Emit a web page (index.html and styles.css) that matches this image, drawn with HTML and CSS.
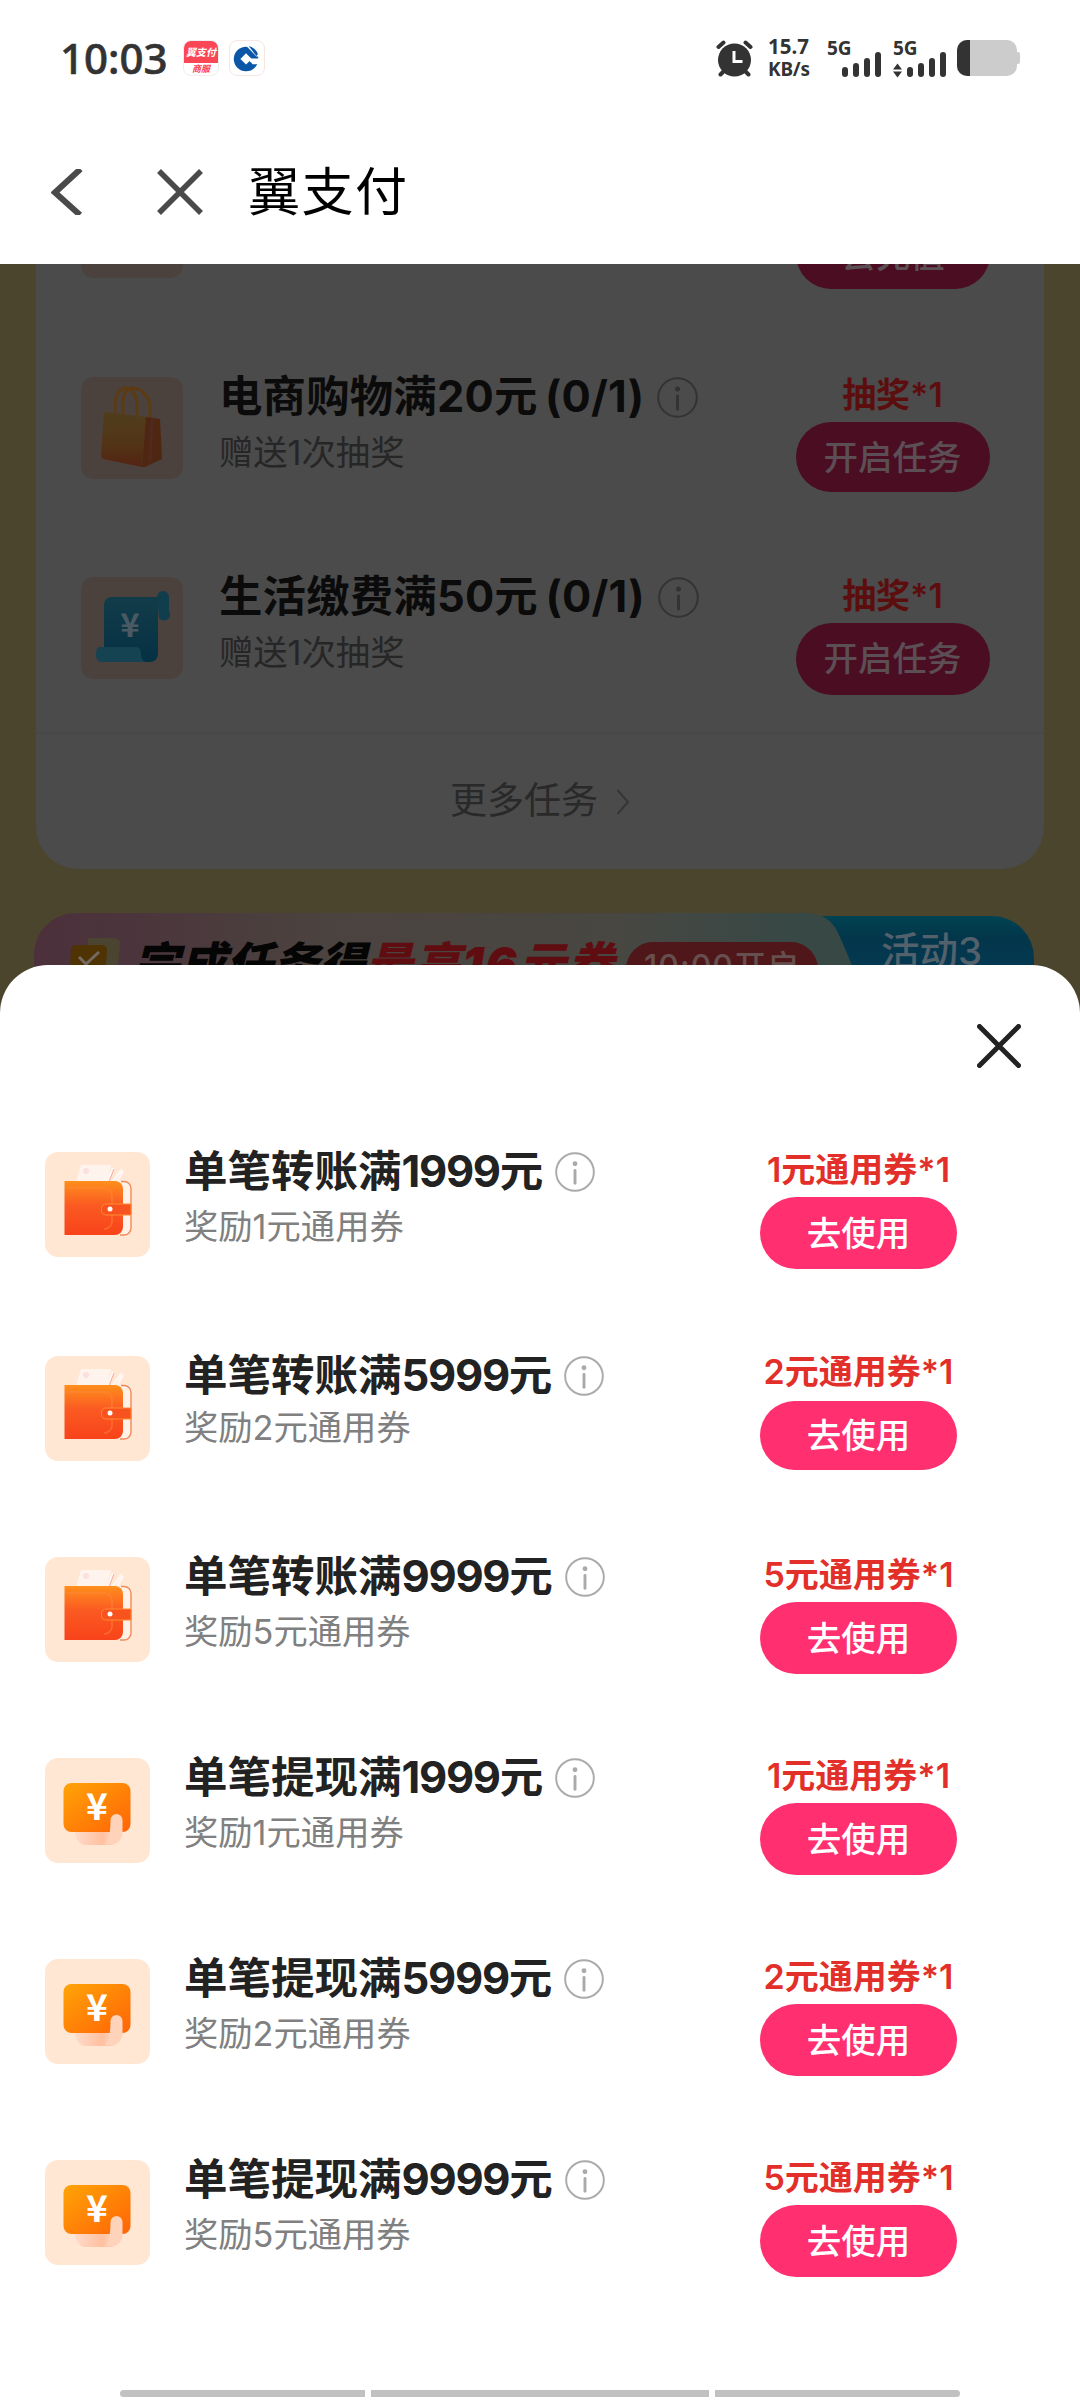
FILE: index.html
```html
<!DOCTYPE html>
<html lang="zh-CN">
<head>
<meta charset="utf-8">
<title>翼支付</title>
<link rel="stylesheet" href="styles.css">
</head>
<body>
<svg class="defs" width="0" height="0" aria-hidden="true">
  <defs>
    <linearGradient id="g-wallet" x1="0" y1="0" x2="0" y2="1"><stop offset="0" stop-color="#ff8f1c"/><stop offset=".45" stop-color="#fb5a22"/><stop offset="1" stop-color="#f8431a"/></linearGradient>
    <linearGradient id="g-cash" x1="0" y1="0" x2="1" y2="1"><stop offset="0" stop-color="#ffa406"/><stop offset="1" stop-color="#ff6407"/></linearGradient>
    <linearGradient id="g-hand" x1="0" y1="0" x2="1" y2="0"><stop offset="0" stop-color="#ffdccb"/><stop offset=".6" stop-color="#ffc0a0"/><stop offset="1" stop-color="#ffdcc6"/></linearGradient>
    <linearGradient id="g-bag" x1="0" y1="0" x2="0" y2="1"><stop offset="0" stop-color="#4f3d1c"/><stop offset=".6" stop-color="#523415"/><stop offset="1" stop-color="#552314"/></linearGradient>
    <linearGradient id="g-bill" x1="0" y1="0" x2="0" y2="1"><stop offset="0" stop-color="#123c49"/><stop offset="1" stop-color="#063144"/></linearGradient>
  </defs>
  <symbol id="info" viewBox="0 0 41 41"><circle cx="20.500" cy="20.500" r="19.300" fill="none" stroke="currentColor" stroke-width="2"/><circle cx="20.500" cy="12" r="2.500" fill="currentColor"/><path d="M20.500 19v13" stroke="currentColor" stroke-width="3" stroke-linecap="round"/></symbol>
  <symbol id="wallet" viewBox="0 0 105 105">
    <rect width="105" height="105" rx="13" fill="#ffe7d3"/>
    <path d="M36 13h30l-5 20H30z" fill="#fff3ee"/><circle cx="41" cy="19" r="3" fill="#fbe0dc"/>
    <path d="M62 30l6-14M68 29l9-12M72 30l6-11" stroke="#fff5f2" stroke-width="2.500"/><path d="M64 30l5-13" stroke="#f4aca0" stroke-width="1"/>
    <path d="M70 29h9a7 7 0 0 1 7 7v40a7 7 0 0 1-7 7h-9z" fill="#fff1e6"/>
    <path d="M76 29.500h3a7 7 0 0 1 7 7V76a7 7 0 0 1-7 7h-4" fill="none" stroke="#ee8a5c" stroke-width="1.400"/>
    <path d="M19.500 29H70a8 8 0 0 1 8 8v38a8 8 0 0 1-8 8H19.500z" fill="url(#g-wallet)"/>
    <path d="M21 36h38a8 8 0 0 1 8 8v26a8 8 0 0 1-8 7" fill="none" stroke="#ff8a3a" stroke-opacity=".55" stroke-width="1.500"/>
    <path d="M86 52H61a4.500 4.500 0 0 0-4.500 4.500v2A4.500 4.500 0 0 0 61 63h25z" fill="#f8521e" stroke="#ff8a30" stroke-width="1"/>
    <circle cx="65" cy="57" r="2.500" fill="#fff"/>
  </symbol>
  <symbol id="cash" viewBox="0 0 105 105">
    <rect width="105" height="105" rx="13" fill="#ffe7d3"/>
    <path d="M29 70h46v8a9 9 0 0 1-9 9H40c-6 0-10-7-11-17z" fill="url(#g-hand)"/>
    <rect x="18.500" y="25" width="67" height="49" rx="8" fill="url(#g-cash)"/>
    <text x="52" y="62" class="yen" fill="#fff">¥</text>
    <path d="M60 86c4-6 5.500-12 5.500-24a6 6 0 0 1 12 0v13a11 11 0 0 1-11 11z" fill="#ffd2ba"/>
  </symbol>
</svg>

<header class="statusbar">
  <div class="statusbar__left">
    <span class="clock">10:03</span>
    <span class="app app--bestpay"><b>翼支付</b><i>商服</i></span>
    <svg class="app app--bank" viewBox="0 0 36 36"><circle cx="17" cy="19" r="13" fill="#0a57a8"/><path d="M17 13l6 6-6 6-6-6z" fill="#fff"/><path d="M21 18.500h12v6H24l-3-3z" fill="#fff"/><path d="M17.500 5.500L28 16.500h3V4z" fill="#fff"/><path d="M20 5.500c4 .5 8 4 9.500 8.500l-1.500 2z" fill="#0a57a8"/></svg>
  </div>
  <div class="statusbar__right">
    <svg class="alarm" viewBox="0 0 37 37"><g fill="none" stroke="#333" stroke-linecap="round" stroke-width="4"><path d="M2.500 7l5-4.500M34.500 7l-5-4.500M4.500 34.500l4-4M32.500 34.500l-4-4"/></g><circle cx="18.500" cy="20" r="16.500" fill="#333"/><path d="M18 11v10.500h8.500" fill="none" stroke="#fff" stroke-width="3"/></svg>
    <div class="rate"><span>15.7</span><span class="rate__unit">KB/s</span></div>
    <div class="signal"><span>5G</span><svg viewBox="0 0 56 27"><g fill="#333"><rect x="15" y="16" width="6" height="10" rx="3"/><rect x="26" y="12" width="6" height="14" rx="3"/><rect x="37" y="7" width="6" height="19" rx="3"/><rect x="48" y="1" width="6" height="25" rx="3"/></g></svg></div>
    <div class="signal signal--data"><span>5G</span><svg viewBox="0 0 56 27"><g fill="#333"><path d="M0 18.500 4.500 12.500 9 18.500zM0 20.500 4.500 26.500 9 20.500z"/><rect x="14" y="16" width="6" height="10" rx="3"/><rect x="25" y="12" width="6" height="14" rx="3"/><rect x="36" y="7" width="6" height="19" rx="3"/><rect x="47" y="1" width="6" height="25" rx="3"/></g></svg></div>
    <svg class="battery" viewBox="0 0 63 36"><rect x="56" y="12" width="7" height="12" rx="2" fill="#ccc"/><rect width="60" height="36" rx="10" fill="#ccc"/><path d="M13 0H10A10 10 0 0 0 0 10v16a10 10 0 0 0 10 10h3z" fill="#333"/></svg>
  </div>
</header>

<nav class="titlebar">
  <svg class="titlebar__back" viewBox="0 0 32 46"><path d="M29.500 0 4 23.500 29 46" fill="none" stroke="#4a4a4a" stroke-width="6"/></svg>
  <svg class="titlebar__close" viewBox="0 0 46 46"><path d="M2 2 44 44M44 2 2 44" stroke="#4a4a4a" stroke-width="5.500"/></svg>
  <h1>翼支付</h1>
</nav>

<main class="backdrop">
  <section class="card">
    <div class="task task--cut">
      <span class="task__blank"></span>
      <span class="task__button">去充值</span>
    </div>
    <div class="task">
      <svg class="task__icon" viewBox="0 0 102 102"><rect width="102" height="102" rx="13" fill="#4b423d"/><g fill="none" stroke="#5c3a12" stroke-width="3"><path d="M34 40V28c0-10 5-17 11-17s11 8 11 17v11"/><path d="M42 38V26c0-9 4-15 10-15 8 0 17 9 17 19v12"/></g><path d="M23 35l42 5-4 50-39-8a3 3 0 0 1-2-3z" fill="url(#g-bag)"/><path d="M65 40l14 2 2 40-17 8h-3z" fill="#4f2711"/><path d="M71 42l-2 43" stroke="#502a22" stroke-width="3"/></svg>
      <div class="task__main"><h2>电商购物满20元 (0/1)<svg class="info"><use href="#info"/></svg></h2><p>赠送1次抽奖</p></div>
      <div class="task__side"><strong>抽奖*1</strong><span class="task__button">开启任务</span></div>
    </div>
    <div class="task task--last">
      <svg class="task__icon" viewBox="0 0 102 102"><rect width="102" height="102" rx="13" fill="#4b423d"/><path d="M76 20a6 6 0 0 1 12 0v14a6 6 0 0 1-10 7z" fill="#113e4d"/><path d="M31 20h52c-4 1-6 4-6 9v48a8 8 0 0 1-8 8H48L23 70V28c0-5 3-8 8-8z" fill="url(#g-bill)"/><path d="M19 70h36c4 0 5 3 5 7s2 8 6 8H21c-4 0-6-3-6-7s1-8 4-8z" fill="#154351"/><text x="49" y="60" class="yen yen--small" fill="#4a5a64">¥</text></svg>
      <div class="task__main"><h2>生活缴费满50元 (0/1)<svg class="info"><use href="#info"/></svg></h2><p>赠送1次抽奖</p></div>
      <div class="task__side"><strong>抽奖*1</strong><span class="task__button">开启任务</span></div>
    </div>
    <div class="more"><span>更多任务</span><svg viewBox="0 0 14 28"><path d="M1.500 2l10.500 12L1.500 26" fill="none" stroke="#363636" stroke-width="2"/></svg></div>
  </section>
  <section class="banner">
    <svg class="banner__shape" viewBox="0 0 1000 90" preserveAspectRatio="none">
      <defs>
        <linearGradient id="g-ban" x1="0" x2="1"><stop offset="0" stop-color="#4c303b"/><stop offset=".12" stop-color="#4b353c"/><stop offset=".35" stop-color="#4b433f"/><stop offset=".7" stop-color="#484742"/><stop offset=".9" stop-color="#384845"/></linearGradient>
        <linearGradient id="g-tab" x1="0" y1="0" x2="0" y2="1"><stop offset="0" stop-color="#004352"/><stop offset=".25" stop-color="#03364a"/><stop offset="1" stop-color="#063d5c"/></linearGradient>
      </defs>
      <path d="M780 3h178a42 42 0 0 1 42 42v45H780z" fill="url(#g-tab)"/>
      <path d="M0 90V45A42 42 0 0 1 42 0H770c22 0 30 10 36 24l28 66z" fill="url(#g-ban)"/>
    </svg>
    <svg class="banner__icon" viewBox="0 0 52 60"><path d="M20 1h26a6 6 0 0 1 6 6l-5 50H16z" fill="#4b4430"/><path d="M8 8h26a5 5 0 0 1 5 5l-4 47H0L3 13a5 5 0 0 1 5-5z" fill="#4f3303"/><path d="M11 20l7 7 13-12" fill="none" stroke="#756a60" stroke-width="3"/></svg>
    <p class="banner__title">完成任务得<em>最高16元券</em></p>
    <span class="banner__time">10:00开启</span>
    <span class="banner__tab">活动3</span>
  </section>
</main>

<section class="sheet">
  <div class="sheet__head"><svg viewBox="0 0 44 44"><path d="M2.500 2.500l39 39M41.500 2.500l-39 39" stroke="#222" stroke-width="5" stroke-linecap="round"/></svg></div>
  <ul class="coupons">
    <li class="coupon"><svg class="coupon__icon"><use href="#wallet"/></svg><div class="coupon__main"><h2>单笔转账满<b>1999</b>元<svg class="info"><use href="#info"/></svg></h2><p>奖励1元通用券</p></div><div class="coupon__side"><strong>1元通用券*1</strong><span class="coupon__button">去使用</span></div></li>
    <li class="coupon coupon--tight"><svg class="coupon__icon"><use href="#wallet"/></svg><div class="coupon__main"><h2>单笔转账满<b>5999</b>元<svg class="info"><use href="#info"/></svg></h2><p>奖励2元通用券</p></div><div class="coupon__side"><strong>2元通用券*1</strong><span class="coupon__button">去使用</span></div></li>
    <li class="coupon"><svg class="coupon__icon"><use href="#wallet"/></svg><div class="coupon__main"><h2>单笔转账满<b>9999</b>元<svg class="info"><use href="#info"/></svg></h2><p>奖励5元通用券</p></div><div class="coupon__side"><strong>5元通用券*1</strong><span class="coupon__button">去使用</span></div></li>
    <li class="coupon"><svg class="coupon__icon"><use href="#cash"/></svg><div class="coupon__main"><h2>单笔提现满<b>1999</b>元<svg class="info"><use href="#info"/></svg></h2><p>奖励1元通用券</p></div><div class="coupon__side"><strong>1元通用券*1</strong><span class="coupon__button">去使用</span></div></li>
    <li class="coupon"><svg class="coupon__icon"><use href="#cash"/></svg><div class="coupon__main"><h2>单笔提现满<b>5999</b>元<svg class="info"><use href="#info"/></svg></h2><p>奖励2元通用券</p></div><div class="coupon__side"><strong>2元通用券*1</strong><span class="coupon__button">去使用</span></div></li>
    <li class="coupon"><svg class="coupon__icon"><use href="#cash"/></svg><div class="coupon__main"><h2>单笔提现满<b>9999</b>元<svg class="info"><use href="#info"/></svg></h2><p>奖励5元通用券</p></div><div class="coupon__side"><strong>5元通用券*1</strong><span class="coupon__button">去使用</span></div></li>
  </ul>
  <div class="gesture"><i></i><i></i><i></i></div>
</section>
</body>
</html>
```
FILE: styles.css
```css
* { box-sizing: border-box; margin: 0; padding: 0; }
body {
  position: relative;
  width: 1080px;
  height: 2400px;
  overflow: hidden;
  background: #fff;
  color: #222;
  font-family: Inter, "Noto Sans CJK SC", sans-serif;
}
h1, h2, p, span, strong { white-space: nowrap; }
svg { display: block; flex: none; }
.defs { position: absolute; }
.yen { font: 700 37px "Noto Sans CJK SC", sans-serif; text-anchor: middle; }
.yen--small { font-size: 33px; }

/* status bar */
.statusbar { display: flex; justify-content: space-between; height: 116px; padding: 40px 60px; color: #333; }
.statusbar__left, .statusbar__right { display: flex; }
.clock { width: 123px; font: 500 42px/36px "Noto Sans", sans-serif; -webkit-text-stroke: 0.6px #333; }
.app { width: 36px; height: 36px; border-radius: 8px; overflow: hidden; margin-right: 10px; }
.app--bestpay { display: flex; flex-direction: column; border: 1px solid #eee; background: #fff; color: #ff4055; text-align: center; }
.app--bestpay b { height: 22px; background: #fb4656; color: #fff; font: italic 700 10px/22px "Noto Sans CJK SC", sans-serif; }
.app--bestpay i { font: italic 700 9px/12px "Noto Sans CJK SC", sans-serif; }
.app--bank { border: 1px solid #f5e6e0; }
.alarm { width: 37px; height: 37px; margin-right: 15px; }
.rate { display: flex; flex-direction: column; width: 59px; font: 700 20.500px/23px "Noto Sans", sans-serif; margin-top: -5px; }
.rate__unit { font-size: 19px; letter-spacing: -0.2px; }
.signal { width: 66px; font: 700 19px/14px "Noto Sans", sans-serif; padding-top: 1px; }
.signal span { display: block; height: 10px; }
.signal svg { width: 56px; height: 27px; }
.signal--data { width: 64px; }
.battery { width: 63px; height: 36px; }

/* title bar */
.titlebar { display: flex; align-items: flex-start; height: 148px; padding: 53px 0 0 51px; }
.titlebar__back { width: 32px; height: 46px; }
.titlebar__close { width: 46px; height: 46px; margin-left: 74px; }
.titlebar h1 { margin-left: 45px; padding-top: 1px; font-size: 52px; line-height: 46px; font-weight: 400; letter-spacing: 1.500px; color: #000; }

/* dimmed page under the sheet */
.backdrop { height: 760px; padding: 0 36px; background: #4b452e; overflow: hidden; color: #0b0b0b; }
.card { height: 605px; border-radius: 0 0 42px 42px; background: #4b4b4b; overflow: hidden; }
.task { display: flex; height: 200px; padding: 0 54px 0 45px; }
.task--cut { height: 113px; justify-content: space-between; }
.task__blank { width: 102px; height: 14px; border-radius: 0 0 13px 13px; background: #4b423d; }
.task--cut .task__button { margin-top: -45px; line-height: 74px; }
.task__icon { width: 102px; height: 102px; }
.task__main { width: 574px; padding-left: 36px; }
.task__main h2 { display: flex; align-items: flex-start; height: 41px; font-size: 43.400px; line-height: 39px; letter-spacing: 0.2px; word-spacing: -3px; }
.info { width: 41px; height: 41px; margin-left: 13px; color: #333; }
.task__main p { margin-top: 15px; font-size: 34.300px; line-height: 40px; color: #262626; }
.task__side { display: flex; flex-direction: column; align-items: center; width: 195px; margin-left: auto; }
.task__side strong { height: 45px; line-height: 36px; font-size: 34px; font-weight: 600; color: #5c0e0f; }
.task__button { width: 194px; height: 70px; border-radius: 36px; background: #4b0d21; color: #5c4e55; font-size: 34.500px; line-height: 72px; text-align: center; font-weight: 500; }
.task--last { height: 155px; }
.task--last .task__side { padding-top: 1px; }
.task--last .task__button { height: 72px; }
.more { display: flex; justify-content: center; align-items: center; gap: 18px; height: 137px; padding-bottom: 8px; border-top: 2px solid #484848; color: #292929; font-size: 37px; }
.more svg { width: 14px; height: 28px; margin-top: 8px; }

.banner { position: relative; width: 1000px; height: 90px; margin: 44px 0 0 -2px; }
.banner__shape { position: absolute; inset: 0; width: 1000px; height: 90px; }
.banner__icon { position: absolute; left: 34px; top: 24px; width: 52px; height: 60px; }
.banner__title { position: absolute; left: 99px; top: 21px; font: italic 900 46.500px/60px Inter, "Noto Sans CJK SC", sans-serif; color: #050505; }
.banner__title em { color: #5f0d10; letter-spacing: 2px; }
.banner__time { position: absolute; left: 592px; top: 29px; width: 192px; height: 54px; border-radius: 27px; background: #4f1719; color: #66504f; font-size: 32px; font-weight: 500; line-height: 50px; letter-spacing: 1px; text-align: center; }
.banner__tab { position: absolute; left: 847px; top: 16px; font-size: 38.500px; font-weight: 500; line-height: 44px; color: #53616c; }

/* bottom sheet */
.sheet { position: absolute; left: 0; top: 965px; width: 1080px; height: 1435px; border-radius: 48px 48px 0 0; background: #fff; }
.sheet__head { display: flex; justify-content: flex-end; height: 187px; padding: 59px 59px 0 0; }
.sheet__head svg { width: 44px; height: 44px; }
.coupons { list-style: none; height: 1238px; }
.coupon { display: flex; height: 201px; padding: 0 123px 0 45px; }
.coupon:first-child { height: 204px; }
.coupon__icon { width: 105px; height: 105px; }
.coupon__main { padding-left: 34px; }
.coupon__main h2 { display: flex; align-items: flex-start; height: 40px; font-size: 43.500px; line-height: 38px; }
.coupon__main h2 b { font-weight: 700; letter-spacing: -1.300px; }
.coupon .info { width: 40px; height: 40px; margin-left: 12px; color: #aaa; }
.coupon__main p { margin-top: 15px; font-size: 34.300px; line-height: 40px; color: #808080; }
.coupon__side { display: flex; flex-direction: column; align-items: center; width: 197px; margin-left: auto; }
.coupon__side strong { height: 45px; line-height: 36px; font-size: 34px; font-weight: 600; color: #e32f2a; }
.coupon__button { width: 197px; height: 72px; border-radius: 36px; background: #ff2f70; color: #fff; font-size: 34.500px; line-height: 73px; text-align: center; font-weight: 500; }
.coupon--tight .coupon__main p { margin-top: 12px; }
.coupon--tight .coupon__side strong { margin-top: -2px; height: 47px; }
.coupon--tight .coupon__button { height: 69px; line-height: 70px; }
.gesture { display: flex; gap: 6px; padding: 0 120px; }
.gesture i { height: 7px; width: 245px; background: #c1c1c1; border-radius: 4px 0 0 4px; }
.gesture i:nth-child(2) { width: 338px; border-radius: 0; }
.gesture i:last-child { border-radius: 0 4px 4px 0; }
```
